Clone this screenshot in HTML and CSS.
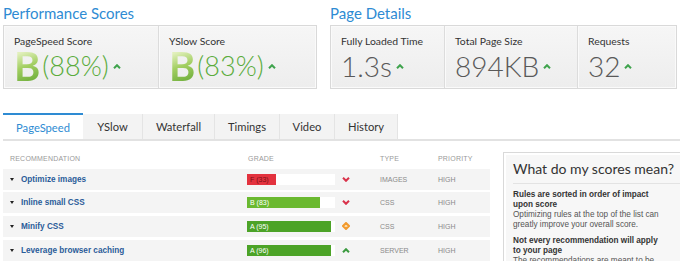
FILE: index.html
```html
<!DOCTYPE html>
<html>
<head>
<meta charset="utf-8">
<link rel="stylesheet" href="styles.css">
</head>
<body>
<div class="top">
  <section class="group g1">
    <h2>Performance Scores</h2>
    <div class="box">
      <div class="cell c-ps">
        <div class="label">PageSpeed Score</div>
        <div class="score"><span class="grade">B</span><span class="pct">(88%)</span><svg class="up" viewBox="0 0 8 5"><polyline points="1,4.2 4,1.2 7,4.2"/></svg></div>
      </div>
      <div class="cell c-ys">
        <div class="label">YSlow Score</div>
        <div class="score"><span class="grade">B</span><span class="pct">(83%)</span><svg class="up" viewBox="0 0 8 5"><polyline points="1,4.2 4,1.2 7,4.2"/></svg></div>
      </div>
    </div>
  </section>
  <section class="group g2">
    <h2>Page Details</h2>
    <div class="box">
      <div class="cell c-fl">
        <div class="label">Fully Loaded Time</div>
        <div class="score"><span class="val">1.3s</span><svg class="up" viewBox="0 0 8 5"><polyline points="1,4.2 4,1.2 7,4.2"/></svg></div>
      </div>
      <div class="cell c-sz">
        <div class="label">Total Page Size</div>
        <div class="score"><span class="val">894KB</span><svg class="up" viewBox="0 0 8 5"><polyline points="1,4.2 4,1.2 7,4.2"/></svg></div>
      </div>
      <div class="cell c-rq">
        <div class="label">Requests</div>
        <div class="score"><span class="val">32</span><svg class="up" viewBox="0 0 8 5"><polyline points="1,4.2 4,1.2 7,4.2"/></svg></div>
      </div>
    </div>
  </section>
</div>

<nav class="tabs">
  <a class="tab active t1">PageSpeed</a>
  <a class="tab t2">YSlow</a>
  <a class="tab t3">Waterfall</a>
  <a class="tab t4">Timings</a>
  <a class="tab t5">Video</a>
  <a class="tab t6">History</a>
</nav>

<div class="main">
  <div class="table">
    <div class="row head">
      <div class="rec">RECOMMENDATION</div>
      <div>GRADE</div>
      <div></div>
      <div>TYPE</div>
      <div>PRIORITY</div>
    </div>
    <div class="row">
      <div class="rec"><span class="tri"></span><a>Optimize images</a></div>
      <div><div class="bar"><div class="fill red" style="width:33%">F (33)</div></div></div>
      <div><svg class="ico down" viewBox="0 0 8 5"><polyline points="1,0.8 4,3.8 7,0.8"/></svg></div>
      <div class="muted">IMAGES</div>
      <div class="muted">HIGH</div>
    </div>
    <div class="row">
      <div class="rec"><span class="tri"></span><a>Inline small CSS</a></div>
      <div><div class="bar"><div class="fill lgreen" style="width:83%">B (83)</div></div></div>
      <div><svg class="ico down" viewBox="0 0 8 5"><polyline points="1,0.8 4,3.8 7,0.8"/></svg></div>
      <div class="muted">CSS</div>
      <div class="muted">HIGH</div>
    </div>
    <div class="row">
      <div class="rec"><span class="tri"></span><a>Minify CSS</a></div>
      <div><div class="bar"><div class="fill green" style="width:95%">A (95)</div></div></div>
      <div><svg class="ico dia" viewBox="0 0 8 8"><polygon points="4,1 7,4 4,7 1,4"/></svg></div>
      <div class="muted">CSS</div>
      <div class="muted">HIGH</div>
    </div>
    <div class="row">
      <div class="rec"><span class="tri"></span><a>Leverage browser caching</a></div>
      <div><div class="bar"><div class="fill green" style="width:96%">A (96)</div></div></div>
      <div><svg class="ico upg" viewBox="0 0 8 5"><polyline points="1,4.2 4,1.2 7,4.2"/></svg></div>
      <div class="muted">SERVER</div>
      <div class="muted">HIGH</div>
    </div>
  </div>
  <aside class="side">
    <h3>What do my scores mean?</h3>
    <p><b>Rules are sorted in order of impact upon score</b>Optimizing rules at the top of the list can greatly improve your overall score.</p>
    <p><b>Not every recommendation will apply to your page</b>The recommendations are meant to be</p>
  </aside>
</div>
</body>
</html>
```

FILE: styles.css
```css
html, body {
  margin: 0;
  padding: 0;
  background: #fff;
  overflow: hidden;
  width: 680px;
  height: 261px;
}
body {
  font-family: "Lato", "Open Sans", sans-serif;
  color: #333;
}
.top {
  display: flex;
  gap: 13px;
  padding: 3px 0 0 3px;
}
.g1 { width: 314px; flex: none; }
.g2 { width: 347px; flex: none; }
h2 {
  margin: 0;
  height: 22px;
  font-size: 15px;
  font-weight: 400;
  color: #2e8bd3;
  line-height: 20px;
}
.box {
  display: flex;
  height: 62px;
  border: 1px solid #d9d9d9;
  background: linear-gradient(#f6f6f6, #ededed);
  box-shadow: inset 0 0 0 1px #fafafa;
}
.cell {
  box-sizing: border-box;
  padding: 9px 0 0 10px;
  border-right: 1px solid #dcdcdc;
  box-shadow: 1px 0 0 #fafafa;
}
.cell:last-child { border-right: 0; box-shadow: none; }
.c-ps { width: 155px; }
.c-ys { flex: 1; }
.c-fl { width: 114px; }
.c-sz { width: 133px; }
.c-rq { flex: 1; }
.label {
  font-size: 10.4px;
  line-height: 13px;
  color: #333;
}
.score {
  display: flex;
  align-items: center;
  height: 34px;
  margin-top: 1px;
}
.grade {
  font-size: 40px;
  font-weight: 700;
  line-height: 30px;
  height: 30px;
  display: inline-block;
  background: linear-gradient(160deg, #e2f0bd 10%, #a3cf63 50%, #6aab38 100%);
  -webkit-background-clip: text;
  background-clip: text;
  color: transparent;
  margin-right: 2px;
}
.pct {
  font-size: 27px;
  font-weight: 300;
  color: #5aac3b;
  line-height: 30px;
}
.val {
  font-size: 28px;
  font-weight: 300;
  color: #595959;
  line-height: 30px;
}
.up {
  width: 8px;
  height: 5px;
  margin-left: 4px;
  fill: none;
  stroke: #3fa34d;
  stroke-width: 2;
}
.tabs {
  display: flex;
  margin: 24px 0 0 3px;
  border-bottom: 2px solid #e2e2e2;
  height: 26px;
}
.tab {
  box-sizing: border-box;
  display: flex;
  align-items: center;
  justify-content: center;
  height: 25px;
  margin-top: 1px;
  font-size: 11.2px;
  color: #333;
  background: #f3f3f3;
  border-right: 1px solid #e4e4e4;
}
.tab.active {
  background: #fff;
  color: #2e8bd3;
  border-top: 2px solid #2e8bd3;
  border-right: 0;
  margin-top: 0;
  height: 26px;
}
.t1 { width: 80px; }
.t2 { width: 60px; }
.t3 { width: 72px; }
.t4 { width: 65px; }
.t5 { width: 55px; }
.t6 { width: 63px; }
.main {
  display: flex;
  gap: 13px;
  padding: 10px 0 0 3px;
}
.table {
  width: 487px;
  flex: none;
  display: flex;
  flex-direction: column;
  gap: 2.7px;
  font-family: "Liberation Sans", Arial, sans-serif;
}
.row {
  display: grid;
  grid-template-columns: 245px 94px 38px 58px 1fr;
  align-items: center;
  height: 21px;
  background: #f4f4f4;
  font-size: 7px;
}
.row.head {
  background: none;
  height: 15px;
  color: #9a9a9a;
  letter-spacing: 0.2px;
}
.rec {
  padding-left: 7px;
  display: flex;
  align-items: center;
}
.tri {
  width: 0;
  height: 0;
  border-left: 2.5px solid transparent;
  border-right: 2.5px solid transparent;
  border-top: 3px solid #222;
  margin-right: 7px;
}
.rec a {
  font-size: 8.2px;
  font-weight: 700;
  color: #2b5c99;
}
.bar {
  width: 88px;
  height: 11px;
  background: #fff;
  margin-left: -1px;
}
.fill {
  height: 11px;
  font-size: 7px;
  line-height: 11px;
  color: #fff;
  padding-left: 3px;
  box-sizing: border-box;
  white-space: nowrap;
}
.red { background: #e3323e; color: #7a1015; }
.lgreen { background: #6ab92f; }
.green { background: #4ca327; }
.ico {
  width: 8px;
  height: 5px;
  fill: none;
  stroke-width: 2;
}
.down { stroke: #d9324a; }
.upg { stroke: #3a9a3f; }
.dia {
  width: 8px;
  height: 8px;
  stroke: #f29a2e;
  stroke-width: 2;
  fill: #fde0b0;
}
.muted {
  color: #8a8a8a;
}
.side {
  width: 190px;
  flex: none;
  box-sizing: border-box;
  margin-top: 1px;
  height: 120px;
  border: 1px solid #d9d9d9;
  box-shadow: inset 0 0 0 2px #fff;
  background: #f7f7f7;
  padding: 6px 0 0 9px;
  font-family: "Liberation Sans", Arial, sans-serif;
}
.side h3 {
  margin: 0 10px 0 0;
  font-family: "Lato", "Open Sans", sans-serif;
  font-weight: 400;
  font-size: 14px;
  line-height: 20px;
  color: #333;
  padding-bottom: 4px;
  border-bottom: 1px solid #e3e3e3;
  white-space: nowrap;
}
.side p {
  margin: 6px 10px 0 0;
  font-size: 8.2px;
  line-height: 10px;
  color: #555;
  width: 150px;
}
.side b {
  display: block;
  color: #333;
}
```
